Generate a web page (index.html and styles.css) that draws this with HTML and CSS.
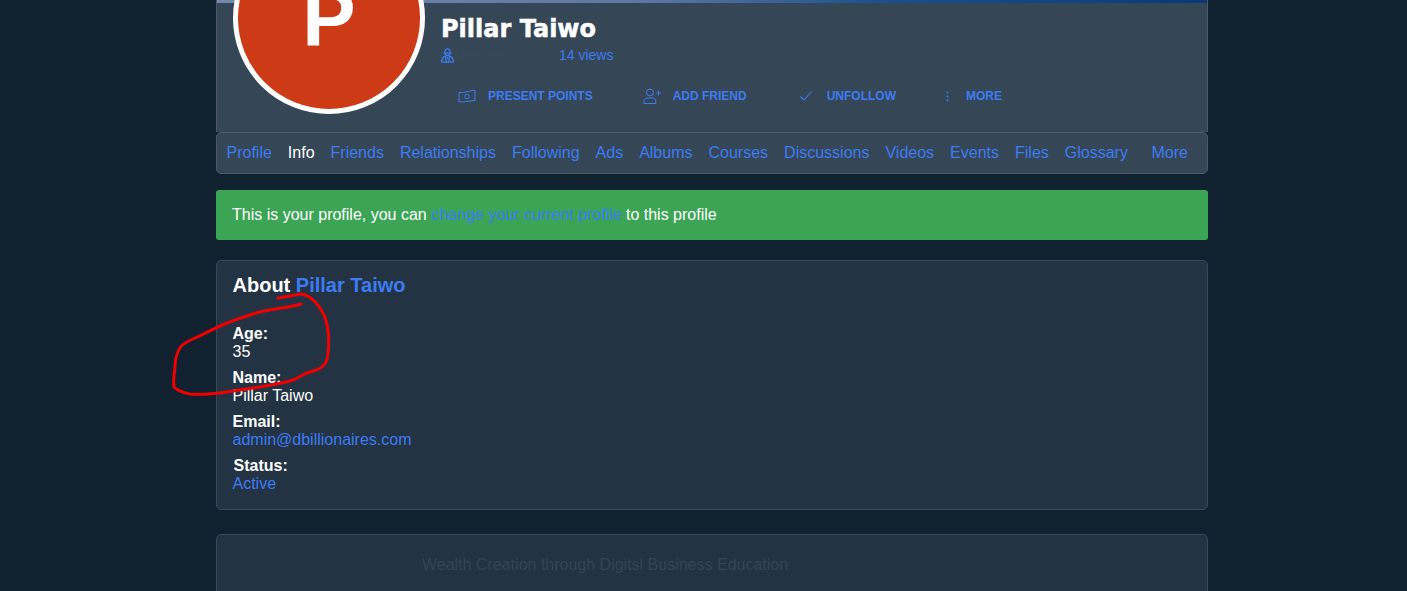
FILE: index.html
```html
<!DOCTYPE html>
<html lang="en">
<head>
  <meta charset="UTF-8">
  <meta name="viewport" content="width=device-width, initial-scale=1.0">
  <title>Pillar Taiwo - Info</title>
  <link rel="stylesheet" href="styles.css">
</head>
<body>

<div class="page">

  <!-- profile header -->
  <header class="profile-head">
    <div class="cover"></div>
    <div class="head-row">
      <div class="avatar">P</div>
      <div class="head-info">
        <h1 class="name">Pillar Taiwo</h1>
        <div class="meta">
          <svg class="meta-icon" viewBox="0 0 14 16" fill="none" stroke="currentColor" stroke-width="1.400">
            <path d="M4 5 C3.800 2.200 5.400 0.800 7 0.800 C8.600 0.800 10.200 2.200 10 5"/>
            <path d="M2.500 5.300 H11.500"/>
            <path d="M4.400 5.600 C4.600 7.400 5.800 8 7 8 C8.200 8 9.400 7.400 9.600 5.600"/>
            <path d="M0.800 15.200 C0.800 11 2.600 9 4.600 8.600 L5.800 15.200 M13.200 15.200 C13.200 11 11.400 9 9.400 8.600 L8.200 15.200 M0.800 15.200 H13.200 M7 9 V11.500"/>
          </svg>
          <span class="meta-hidden">Member</span>
          <a href="#" class="views">14 views</a>
        </div>
        <div class="actions">
          <a href="#" class="action">
            <span class="action-icon">
              <svg width="18" height="14" viewBox="0 0 18 14" fill="none" stroke="currentColor" stroke-width="1">
                <path d="M1 3.500 C5 4.500 12 1.500 17 1.200 V11.500 C12 11.800 5 13.500 1 12.800 Z"/>
                <circle cx="9" cy="7.500" r="2.300"/>
              </svg>
            </span>
            Present Points
          </a>
          <a href="#" class="action">
            <span class="action-icon">
              <svg width="18" height="16" viewBox="0 0 18 16" fill="none" stroke="currentColor" stroke-width="1">
                <circle cx="7" cy="4.500" r="3.500"/>
                <path d="M1 15.500 V13 C1 11 2.500 10 4 10 H10 C11.500 10 12.800 11 12.800 13 V15.500 Z"/>
                <path d="M13 5 H18 M15.500 2.500 V7.500"/>
              </svg>
            </span>
            Add Friend
          </a>
          <a href="#" class="action">
            <span class="action-icon action-icon-check">
              <svg width="14" height="12" viewBox="0 0 14 12" fill="none" stroke="currentColor" stroke-width="1.100">
                <path d="M1.500 6.500 L5 10 L12.500 1.500"/>
              </svg>
            </span>
            Unfollow
          </a>
          <a href="#" class="action">
            <span class="action-icon action-icon-dots">
              <svg width="3" height="11" viewBox="0 0 3 11" fill="currentColor">
                <circle cx="1.500" cy="1.500" r="1"/>
                <circle cx="1.500" cy="5.500" r="1"/>
                <circle cx="1.500" cy="9.500" r="1"/>
              </svg>
            </span>
            More
          </a>
        </div>
      </div>
    </div>
  </header>

  <!-- tabs -->
  <nav class="tabs">
    <a href="#">Profile</a>
    <a href="#" class="active">Info</a>
    <a href="#">Friends</a>
    <a href="#">Relationships</a>
    <a href="#">Following</a>
    <a href="#">Ads</a>
    <a href="#">Albums</a>
    <a href="#">Courses</a>
    <a href="#">Discussions</a>
    <a href="#">Videos</a>
    <a href="#">Events</a>
    <a href="#">Files</a>
    <a href="#">Glossary</a>
    <a href="#" class="tab-more">More</a>
  </nav>

  <div class="alert">This is your profile, you can <a href="#">change your current profile</a> to this profile</div>

  <section class="card about">
    <h2 class="about-title">About <a href="#">Pillar Taiwo</a></h2>
    <div class="field">
      <b>Age:</b>
      <span>35</span>
    </div>
    <div class="field">
      <b>Name:</b>
      <span>Pillar Taiwo</span>
    </div>
    <div class="field">
      <b>Email:</b>
      <a href="#">admin@dbillionaires.com</a>
    </div>
    <div class="field">
      <b class="status-label">Status:</b>
      <a href="#">Active</a>
    </div>
  </section>

  <section class="card slogan">
    <p>Wealth Creation through Digitsl Business Education</p>
  </section>

</div>

<!-- red pen scribble on top of the screenshot -->
<svg class="scribble" viewBox="0 0 1407 591" fill="none" stroke="#f00000" stroke-width="3" stroke-linecap="round" stroke-linejoin="round">
  <path d="M301 304 C288 308 272 309 260 312 C248 315 238 319 227 323 C215 328 204 334 193 339 C186 342 182 344 180 348 C176 354 175 360 175 367 C174 374 173 380 174 387 C178 391 184 393 190 394 C200 395 210 394 220 393 C234 391 247 389 260 387 C271 385 283 383 293 380 C298 378 302 375 307 373 C313 371 319 370 323 366 C327 362 328 358 328 353 C329 345 329 338 328 330 C327 324 326 319 323 313 C320 308 317 303 313 300 C309 296 306 295 302 294 C294 295 286 297 278 298"/>
</svg>

</body>
</html>
```

FILE: styles.css
```css
/* general */
html, body {
  height: 100%;
}

body {
  margin: 0;
  background-color: #11212f;
  color: #fff;
  font-family: 'Liberation Sans', Arial, sans-serif;
  font-size: 16px;
  overflow: hidden;
}

a {
  color: #3d7cf2;
  text-decoration: none;
}

.page {
  width: 992px;
  margin-left: 216px;
}

/* profile header */
.profile-head {
  height: 132px;
  box-sizing: border-box;
  background-color: #354656;
  border-left: 1px solid #4a5a6b;
  border-right: 1px solid #4a5a6b;
}

.cover {
  height: 3px;
  background: linear-gradient(90deg, #7488ab 0%, #5f78a3 42%, #3e6598 55%, #1c4d8c 68%, #134482 85%, #0c3775 100%);
}

.head-row {
  display: flex;
  padding-left: 16px;
}

.avatar {
  width: 192px;
  height: 192px;
  box-sizing: border-box;
  margin-top: -81px;
  border: 5px solid #fff;
  border-radius: 50%;
  background-color: #cc3a16;
  color: #fff;
  display: flex;
  align-items: center;
  justify-content: center;
  font-size: 80px;
  font-weight: bold;
  flex-shrink: 0;
}

.head-info {
  padding-left: 16px;
}

.name {
  margin: 12px 0 0;
  font-family: 'DejaVu Sans', sans-serif;
  font-size: 24px;
  line-height: 28px;
  font-weight: bold;
  -webkit-text-stroke: 0.5px #fff;
}

.meta {
  display: flex;
  align-items: center;
  height: 18px;
  margin-top: 3px;
  font-size: 14px;
  color: #3d7cf2;
}

.meta-icon {
  width: 13px;
  height: 15px;
}

.meta-hidden {
  width: 105px;
  color: #384959;
}

/* actions */
.actions {
  display: flex;
  gap: 50px;
  margin-top: 23px;
  padding-left: 17px;
}

.action {
  display: flex;
  align-items: center;
  height: 18px;
  font-size: 12px;
  font-weight: bold;
  text-transform: uppercase;
}

.action-icon {
  width: 30px;
  display: flex;
  align-items: center;
}

.action-icon-check {
  width: 28px;
  padding-left: 2px;
}

.action-icon-dots {
  width: 20px;
}

/* tabs */
.tabs {
  display: flex;
  gap: 16px;
  height: 42px;
  box-sizing: border-box;
  align-items: center;
  padding: 0 0 0 9.500px;
  background-color: #354656;
  border: 1px solid #4a5a6b;
  border-radius: 5px;
}

.tabs .active {
  color: #fff;
}

.tabs .tab-more {
  margin-left: 7.500px;
}

/* alert */
.alert {
  margin-top: 16px;
  height: 50px;
  box-sizing: border-box;
  padding: 16px;
  line-height: 18px;
  background-color: #3ca455;
  border-radius: 3px;
}

/* cards */
.card {
  box-sizing: border-box;
  background-color: #233343;
  border: 1px solid #36475a;
  border-radius: 5px;
}

.about {
  margin-top: 20px;
  height: 250px;
  padding: 13px 15.500px;
}

.about-title {
  margin: 0 0 28px;
  font-size: 20px;
  line-height: 23px;
}

.field {
  display: flex;
  flex-direction: column;
  align-items: flex-start;
  line-height: 18px;
  margin-bottom: 8px;
}

.status-label {
  margin-left: 1px;
}

.slogan {
  margin-top: 24px;
  height: 120px;
}

.slogan p {
  margin: 21px 0 0 205px;
  line-height: 18px;
  color: #364454;
}

.scribble {
  position: absolute;
  top: 0;
  left: 0;
  width: 1407px;
  height: 591px;
  pointer-events: none;
}
```
